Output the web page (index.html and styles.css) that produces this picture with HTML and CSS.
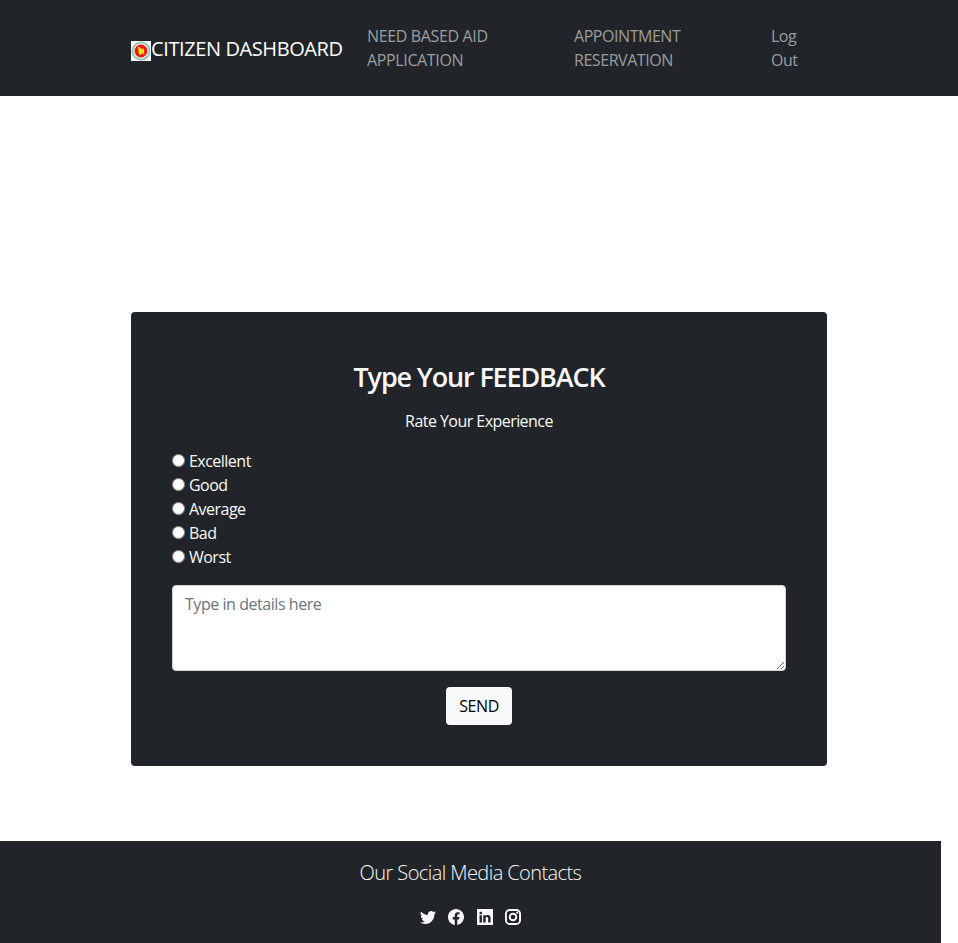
FILE: index.html
```html
<!DOCTYPE html>
<html lang="en">
<head>
<meta charset="utf-8">
<title>Citizen Dashboard</title>
<link rel="stylesheet" href="styles.css">
</head>
<body>
<nav class="navbar">
  <div class="container nav-inner">
    <a class="brand">
      <svg class="emblem" viewBox="0 0 20 20"><path fill="#fff" d="M0 0h20v20H0z"/><circle cx="10" cy="10" r="8.7" fill="#dfe9e2" stroke="#8fc0a4" stroke-width="1.5"/><circle cx="10" cy="10" r="6.4" fill="#ed1c12"/><path fill="#ffe516" d="M7 5.5l2 1.2 1 1.3 2.3-.6 1 2.2-.5 1.9.7 2-1.6-.6-.6-1.2-1.4 2.3-1.8-.7-.6-2.6L7.600 9z"/></svg>
      <span class="brand-name">CITIZEN DASHBOARD</span>
    </a>
    <a class="nav-link link-aid">NEED BASED AID<br>APPLICATION</a>
    <a class="nav-link link-appointment">APPOINTMENT<br>RESERVATION</a>
    <a class="nav-link link-logout">Log<br>Out</a>
  </div>
</nav>
<main class="container">
  <form class="card">
    <h2>Type Your FEEDBACK</h2>
    <p class="lead">Rate Your Experience</p>
    <div class="ratings">
      <label><input type="radio" name="rate"><span>Excellent</span></label>
      <label><input type="radio" name="rate"><span>Good</span></label>
      <label><input type="radio" name="rate"><span>Average</span></label>
      <label><input type="radio" name="rate"><span>Bad</span></label>
      <label><input type="radio" name="rate"><span>Worst</span></label>
    </div>
    <textarea rows="3" placeholder="Type in details here"></textarea>
    <button type="button">SEND</button>
  </form>
</main>
<footer>
  <h5>Our Social Media Contacts</h5>
  <div class="socials">
    <svg viewBox="0 0 16 16"><path d="M5.026 15c6.038 0 9.341-5.003 9.341-9.334 0-.14 0-.282-.006-.422A6.685 6.685 0 0 0 16 3.542a6.658 6.658 0 0 1-1.889.518 3.301 3.301 0 0 0 1.447-1.817 6.533 6.533 0 0 1-2.087.793A3.286 3.286 0 0 0 7.875 6.03a9.325 9.325 0 0 1-6.767-3.429 3.289 3.289 0 0 0 1.018 4.382A3.323 3.323 0 0 1 .64 6.575v.045a3.288 3.288 0 0 0 2.632 3.218 3.203 3.203 0 0 1-.865.115 3.23 3.23 0 0 1-.614-.057 3.283 3.283 0 0 0 3.067 2.277A6.588 6.588 0 0 1 .78 13.58a6.32 6.32 0 0 1-.78-.045A9.344 9.344 0 0 0 5.026 15z"/></svg>
    <svg viewBox="0 0 16 16"><path d="M16 8.049c0-4.446-3.582-8.05-8-8.05C3.58 0-.002 3.603-.002 8.05c0 4.017 2.926 7.347 6.75 7.951v-5.625h-2.03V8.05H6.75V6.275c0-2.017 1.195-3.131 3.022-3.131.876 0 1.791.157 1.791.157v1.98h-1.009c-.993 0-1.303.621-1.303 1.258v1.51h2.218l-.354 2.326H9.25V16c3.824-.604 6.75-3.934 6.75-7.951z"/></svg>
    <svg viewBox="0 0 16 16"><path d="M0 .6Q0 0 .6 0h14.8q.6 0 .6.6v14.8q0 .6-.6.6H.6q-.6 0-.6-.6zm4.943 12.794V6.169H2.542v7.225h2.401zm-1.2-8.212c.837 0 1.358-.554 1.358-1.248-.015-.709-.52-1.248-1.342-1.248-.822 0-1.359.54-1.359 1.248 0 .694.521 1.248 1.327 1.248h.016zm4.908 8.212V9.359c0-.216.016-.432.08-.586.173-.431.568-.878 1.232-.878.869 0 1.216.662 1.216 1.634v3.865h2.401V9.25c0-2.22-1.184-3.252-2.764-3.252-1.274 0-1.845.7-2.165 1.193v.025h-.016l.016-.025V6.169h-2.4c.03.678 0 7.225 0 7.225h2.4z"/></svg>
    <svg viewBox="0 0 16 16"><rect class="ring" x=".95" y=".95" width="14.1" height="14.1" rx="3.800"/><circle class="ring" cx="8" cy="8" r="3.300"/><circle cx="12.200" cy="3.800" r="1.05"/></svg>
  </div>
</footer>
</body>
</html>
```
FILE: styles.css
```css
* { box-sizing: border-box; }
body {
  margin: 0;
  height: 943px;
  overflow: hidden;
  display: flex;
  flex-direction: column;
  background: #fff;
  font: 16px/24px "Segoe UI", "Open Sans", "Noto Sans", sans-serif;
  color: #f8f9fa;
}
.container { width: 696px; margin: 0 auto; }
.navbar { height: 96px; padding: 16px 0; background: #212529; }
.nav-inner { display: grid; grid-template-columns: 236px 207px 197px 1fr; align-items: center; }
.brand { display: flex; align-items: center; font-size: 20px; line-height: 30px; color: #fff; white-space: nowrap; }
.emblem { width: 20px; height: 20px; margin-top: 5px; }
.brand-name { letter-spacing: -.4px; padding-top: 2px; }
.nav-link { padding: 8px 0; color: #9b9d9f; white-space: nowrap; }
.link-aid { letter-spacing: -.36px; }
.link-appointment { letter-spacing: -.45px; }
.link-logout { letter-spacing: -.5px; }
main { padding-top: 216px; }
.card {
  height: 454px;
  padding: 48px 41px 41px;
  display: flex;
  flex-direction: column;
  background: #212529;
  border-radius: 4px;
}
h2 { margin: 0 0 15px; font-size: 27px; line-height: 34px; font-weight: 600; text-align: center; letter-spacing: -1.15px; }
.lead { margin: 0 0 16px; text-align: center; letter-spacing: -.55px; }
.ratings { display: flex; flex-direction: column; margin-bottom: 16px; }
label { height: 24px; display: flex; align-items: flex-start; letter-spacing: -.52px; }
input { width: 13px; height: 13px; margin: 5px 4px 0 0; }
textarea {
  width: 100%;
  height: 86px;
  padding: 6px 12px;
  border: 1px solid #ced4da;
  border-radius: 4px;
  font: inherit;
  background: #fff;
  resize: vertical;
}
textarea::placeholder { color: #6c757d; opacity: 1; letter-spacing: -.45px; }
button {
  align-self: center;
  width: 66px;
  height: 38px;
  margin-top: 16px;
  padding: 0;
  border: 0;
  border-radius: 4px;
  background: #f8f9fa;
  color: #000;
  font: inherit;
  letter-spacing: -.4px;
}
footer {
  width: 941px;
  height: 102px;
  margin-top: 75px;
  padding-top: 20px;
  background: #212529;
  text-align: center;
}
h5 { margin: 0; font-size: 20px; line-height: 24px; font-weight: 300; letter-spacing: -.58px; }
.socials { display: flex; justify-content: center; gap: 12.4px; margin-top: 24px; }
.socials svg { width: 16px; height: 16px; fill: #f8f9fa; }
.socials .ring { fill: none; stroke: #f8f9fa; stroke-width: 1.9px; }
```
